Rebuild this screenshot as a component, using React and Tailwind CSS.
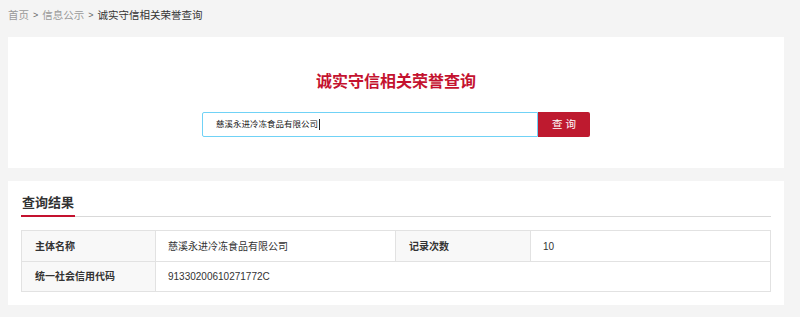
export default function App() {
  const font = { fontFamily: '"Liberation Sans","Noto Sans CJK SC",sans-serif' };
  return (
    <div className="w-[800px] h-[317px] bg-[#f4f4f4] overflow-hidden" style={font}>
      <div className="ml-[8px] w-[776px]">
        <div className="h-[37px] pt-[8px] flex items-start text-[10.5px] leading-[14px] text-[#999]">
          <span>首页</span>
          <span className="mx-[4px] text-[#666] text-[9px]">&gt;</span>
          <span>信息公示</span>
          <span className="mx-[4px] text-[#666] text-[9px]">&gt;</span>
          <span className="text-[#333]">诚实守信相关荣誉查询</span>
        </div>

        <div className="h-[131px] bg-white flex flex-col items-center pt-[34px]">
          <div className="text-[16px] leading-[22px] font-bold text-[#c4122f]">诚实守信相关荣誉查询</div>
          <div className="mt-[19px] flex h-[25px]">
            <div className="w-[336px] h-[25px] border border-[#70d2f6] rounded-l-[2px] flex items-center pl-[13px] text-[8.5px] text-[#222]">
              <span>慈溪永进冷冻食品有限公司</span>
              <span className="inline-block w-px h-[11px] bg-[#222] ml-[1px]"></span>
            </div>
            <div className="w-[52px] h-[25px] bg-[#be1a2f] rounded-r-[2px] flex items-center justify-center text-white text-[10.5px] tracking-[3px] pl-[3px]">
              查询
            </div>
          </div>
        </div>

        <div className="mt-[13px] h-[124px] bg-white px-[13px] pt-[13px]">
          <div className="border-b border-[#d9d9d9] flex">
            <div className="text-[13px] leading-[18px] font-bold text-[#333] pb-[3px] border-b-2 border-[#c4122f] -mb-px px-px">
              查询结果
            </div>
          </div>
          <div className="mt-[13px] border-l border-t border-[#e2e2e2] grid grid-cols-[134px_240px_135px_1fr] text-[10px] text-[#333]">
            <div className="h-[31px] border-r border-b border-[#e2e2e2] bg-[#f8f8f8] font-bold flex items-center pl-[13px]">主体名称</div>
            <div className="h-[31px] border-r border-b border-[#e2e2e2] flex items-center pl-[12px]">慈溪永进冷冻食品有限公司</div>
            <div className="h-[31px] border-r border-b border-[#e2e2e2] bg-[#f8f8f8] font-bold flex items-center pl-[13px]">记录次数</div>
            <div className="h-[31px] border-r border-b border-[#e2e2e2] flex items-center pl-[12px]">10</div>
            <div className="h-[30px] border-r border-b border-[#e2e2e2] bg-[#f8f8f8] font-bold flex items-center pl-[13px]">统一社会信用代码</div>
            <div className="col-span-3 h-[30px] border-r border-b border-[#e2e2e2] flex items-center pl-[12px]">91330200610271772C</div>
          </div>
        </div>
      </div>
    </div>
  );
}
